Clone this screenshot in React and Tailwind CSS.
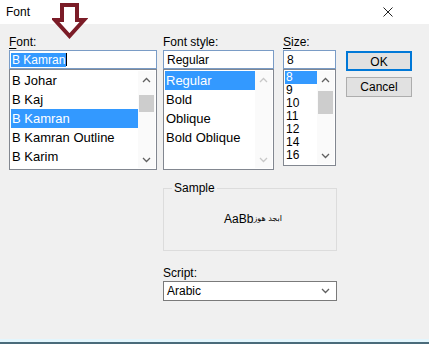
import React from 'react';

const Chevron = ({ up, color = '#606060' }) => (
  <svg width="9" height="6" viewBox="0 0 9 6">
    <polyline
      points={up ? '1,5 4.5,1.5 8,5' : '1,1 4.5,4.5 8,1'}
      fill="none"
      stroke={color}
      strokeWidth="1.3"
    />
  </svg>
);

const ScrollBar = ({ thumbTop, thumbHeight, disabled }) => (
  <div className="w-[17px] h-full flex flex-col bg-[#fafafa]">
    <div className="h-[17px] flex items-center justify-center">
      <Chevron up color={disabled ? '#c8c8c8' : '#606060'} />
    </div>
    <div className="flex-1 relative">
      {!disabled && (
        <div
          className="absolute left-[1px] right-[1px] bg-[#cdcdcd]"
          style={{ top: thumbTop, height: thumbHeight }}
        />
      )}
    </div>
    <div className="h-[17px] flex items-center justify-center">
      <Chevron color={disabled ? '#c8c8c8' : '#606060'} />
    </div>
  </div>
);

const Label = ({ u, rest }) => (
  <div className="h-[15px] text-[12px] leading-[14px] text-black">
    <span className="underline underline-offset-2">{u}</span>
    {rest}
  </div>
);

export default function App() {
  const fonts = ['B Johar', 'B Kaj', 'B Kamran', 'B Kamran Outline', 'B Karim'];
  const styles = ['Regular', 'Bold', 'Oblique', 'Bold Oblique'];
  const sizes = ['8', '9', '10', '11', '12', '14', '16'];

  return (
    <div className="w-[429px] h-[344px] overflow-hidden bg-[#f0f0f0] font-['Liberation_Sans',Arial,sans-serif] relative">
      {/* Title bar */}
      <div className="h-[24px] bg-white flex items-center justify-between pl-[6px] pr-[36px]">
        <span className="text-[12px] text-black">Font</span>
        <svg width="10" height="10" viewBox="0 0 10 10">
          <path d="M0.5 0.5 L9.5 9.5 M9.5 0.5 L0.5 9.5" stroke="#222" strokeWidth="1" />
        </svg>
      </div>

      {/* annotation arrow */}
      <svg className="absolute left-[52px] top-[2px]" width="36" height="38" viewBox="0 0 36 38">
        <polygon
          points="10,3 25,3 25,18 32,18 17.5,34 3,18 10,18"
          fill="#ffffff"
          stroke="#7b1c27"
          strokeWidth="4"
          strokeLinejoin="miter"
        />
      </svg>

      <div className="flex pl-[9px] pt-[11px]">
        {/* Font column */}
        <div className="w-[148px]">
          <Label u="F" rest="ont:" />
          <div className="h-[19px] border border-[#7a9cc6] bg-white flex items-center pl-[1px]">
            <span className="bg-[#3399ff] text-white text-[12px] leading-[14px] px-[1px]">B Kamran</span>
            <span className="w-px h-[13px] bg-black" />
          </div>
          <div className="h-[101px] border border-[#828790] bg-white p-[1px] flex">
            <div className="flex-1">
              {fonts.map((f) => (
                <div
                  key={f}
                  className={`h-[19px] leading-[19px] text-[13px] pl-[1px] ${
                    f === 'B Kamran' ? 'bg-[#3399ff] text-white' : 'text-black'
                  }`}
                >
                  {f}
                </div>
              ))}
            </div>
            <ScrollBar thumbTop={7} thumbHeight={17} />
          </div>
        </div>

        {/* Font style column */}
        <div className="w-[111px] ml-[6px]">
          <Label u="" rest="Font style:" />
          <div className="h-[19px] border border-[#7a9cc6] bg-white flex items-center pl-[3px] text-[12px]">
            Regular
          </div>
          <div className="h-[101px] border border-[#828790] bg-white p-[1px] flex">
            <div className="flex-1">
              {styles.map((s) => (
                <div
                  key={s}
                  className={`h-[19px] leading-[19px] text-[13px] pl-[1px] ${
                    s === 'Regular' ? 'bg-[#3399ff] text-white' : 'text-black'
                  }`}
                >
                  {s}
                </div>
              ))}
            </div>
            <ScrollBar disabled />
          </div>
        </div>

        {/* Size column */}
        <div className="w-[53px] ml-[9px]">
          <Label u="S" rest="ize:" />
          <div className="h-[19px] border border-[#7a9cc6] bg-white flex items-center pl-[3px] text-[12px]">
            8
          </div>
          <div className="h-[97px] border border-[#828790] bg-white p-[1px] flex">
            <div className="flex-1">
              {sizes.map((s) => (
                <div
                  key={s}
                  className={`h-[13px] leading-[13px] text-[12px] pl-[1px] ${
                    s === '8' ? 'bg-[#3399ff] text-white' : 'text-black'
                  }`}
                >
                  {s}
                </div>
              ))}
            </div>
            <ScrollBar thumbTop={3} thumbHeight={23} />
          </div>
        </div>

        {/* Buttons */}
        <div className="w-[66px] ml-[10px] pt-[16px] flex flex-col gap-[6px]">
          <button className="h-[20px] border-2 border-[#0078d7] bg-[#e1e1e1] text-[12px] text-black">
            OK
          </button>
          <button className="h-[20px] border border-[#adadad] bg-[#e1e1e1] text-[12px] text-black">
            Cancel
          </button>
        </div>
      </div>

      {/* Sample + script */}
      <div className="ml-[163px] w-[174px]">
        <fieldset className="mt-[11px] h-[70px] border border-[#dcdcdc] px-[2px]">
          <legend className="ml-[6px] px-[2px] text-[12px] leading-[14px] text-black">Sample</legend>
          <div className="h-[48px] flex items-center justify-center pl-[6px] text-black">
            <span className="text-[12px]">AaBb</span>
            <span className="text-[8px] font-['DejaVu_Sans',sans-serif]">ابجد هوز</span>
          </div>
        </fieldset>

        <div className="mt-[15px]">
          <Label u="" rest="Script:" />
          <div className="h-[20px] border border-[#7a7a7a] bg-white flex items-center justify-between pl-[3px] pr-[6px] text-[12px] text-black">
            Arabic
            <Chevron />
          </div>
        </div>
      </div>

      {/* bottom edge */}
      <div className="absolute left-0 right-0 bottom-0">
        <div className="h-[3px] bg-[#e3f6fd]" />
        <div className="h-[2px] bg-[#4a6b7a]" />
      </div>
    </div>
  );
}
